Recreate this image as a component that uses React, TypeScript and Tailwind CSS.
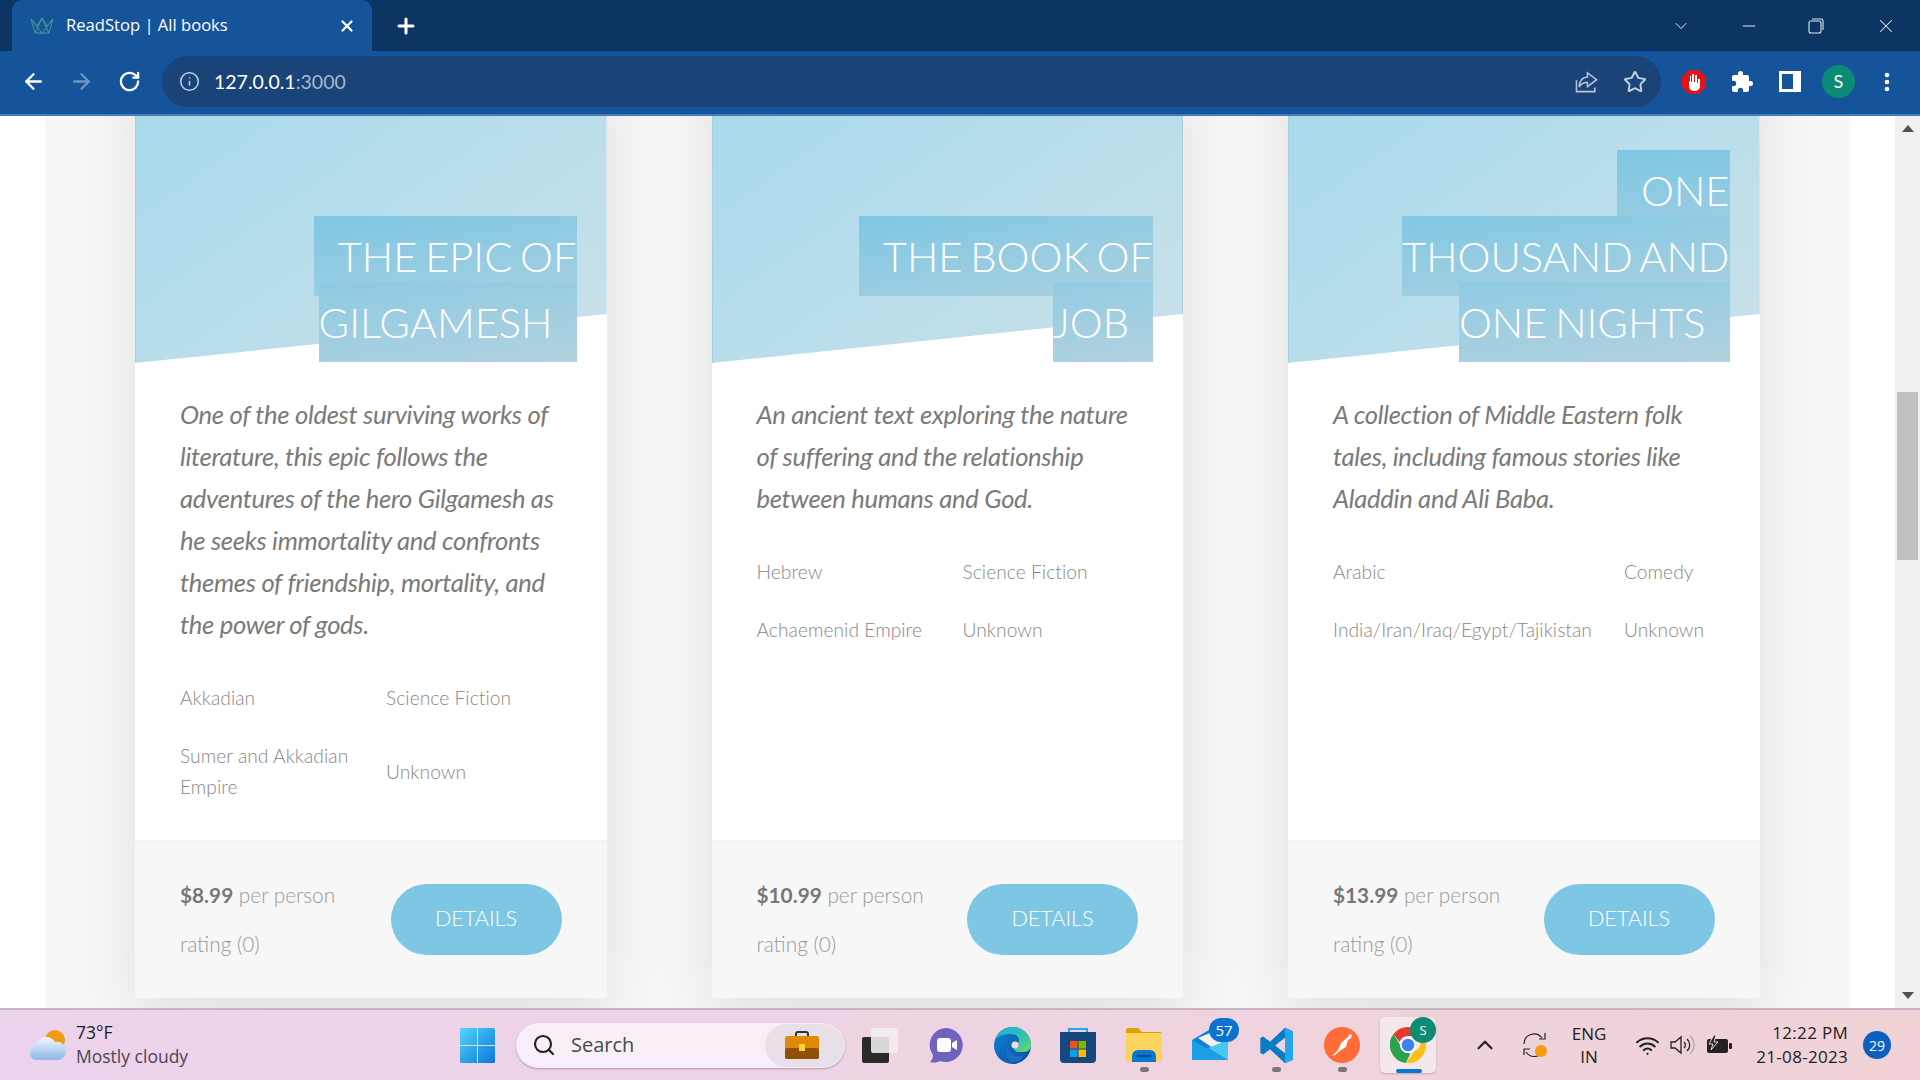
import { ArrowLeft, ArrowRight, RotateCw, Info, Star, Plus, X, ChevronDown, ChevronUp, Minus, EllipsisVertical, Search, Wifi } from "lucide-react";

const BOOKS = [
  {
    title: "THE EPIC OF GILGAMESH",
    summary:
      "One of the oldest surviving works of literature, this epic follows the adventures of the hero Gilgamesh as he seeks immortality and confronts themes of friendship, mortality, and the power of gods.",
    language: "Akkadian",
    genre: "Science Fiction",
    origin: "Sumer and Akkadian Empire",
    author: "Unknown",
    price: "$8.99",
    cols: "grid-cols-[206px_1fr]",
  },
  {
    title: "THE BOOK OF JOB",
    summary:
      "An ancient text exploring the nature of suffering and the relationship between humans and God.",
    language: "Hebrew",
    genre: "Science Fiction",
    origin: "Achaemenid Empire",
    author: "Unknown",
    price: "$10.99",
    cols: "grid-cols-[206px_1fr]",
  },
  {
    title: "ONE THOUSAND AND ONE NIGHTS",
    summary:
      "A collection of Middle Eastern folk tales, including famous stories like Aladdin and Ali Baba.",
    language: "Arabic",
    genre: "Comedy",
    origin: "India/Iran/Iraq/Egypt/Tajikistan",
    author: "Unknown",
    price: "$13.99",
    cols: "grid-cols-[291px_1fr]",
  },
];

function BookCard({ book }: { book: (typeof BOOKS)[number] }) {
  return (
    <div className="flex flex-col bg-white rounded-[3px] shadow-[0_24px_64px_rgba(0,0,0,0.09)]">
      {/* Header */}
      <div className="relative h-[327px] shrink-0">
        <div className="h-full border-x border-[#a6d0e0] bg-linear-to-br from-[#a4d9ec] to-[#c9e1ea] [clip-path:polygon(0_0,100%_0,100%_85%,0_100%)]" />
        <h3 className="absolute right-[30px] bottom-[8px] w-[340px] text-right text-[41.6px] leading-[66px] font-light text-white [word-spacing:-3.5px]">
          <span className="px-6 py-[15px] bg-linear-to-br from-[#7ec7e4] to-[#b2d2df]">{book.title}</span>
        </h3>
      </div>

      {/* Details */}
      <div className="flex-1 px-[45px] pt-[30px] pb-[38px]">
        <p className="text-[25.6px] leading-[42px] italic font-normal text-[#7a7a7a] tracking-[-0.3px]">{book.summary}</p>
        <div className={`grid ${book.cols} gap-y-[27px] items-center mt-[37px] text-[19.2px] leading-[31px] font-light text-[#888] tracking-[0.05px]`}>
          <span>{book.language}</span>
          <span>{book.genre}</span>
          <span>{book.origin}</span>
          <span>{book.author}</span>
        </div>
      </div>

      {/* Footer */}
      <div className="flex items-center justify-between h-[158px] px-[45px] bg-[#f7f7f7] border-t border-[#f2f2f2] rounded-b-[3px]">
        <div className="pb-[2px] text-[20.8px] leading-[31px] font-light text-[#999]">
          <p>
            <b className="font-bold text-[#777]">{book.price}</b> per person
          </p>
          <p className="mt-[18px]">rating (0)</p>
        </div>
        <button className="w-[171px] h-[71px] pb-[2px] rounded-full bg-[#7ec7e4] text-white text-[21.6px] font-light">DETAILS</button>
      </div>
    </div>
  );
}

function Favicon() {
  return (
    <svg width="24" height="18" viewBox="0 0 24 18" fill="none" stroke="#3f9f8d" strokeWidth="1">
      <path d="M1 2l4 14h14l4-14-6 7-5-8-5 8z" />
      <path d="M5 16l7-15 7 15M1 2l11 14L23 2" />
    </svg>
  );
}

function TitleBar() {
  return (
    <div className="flex items-end h-[51px] bg-[#0d3564] text-white shrink-0">
      <div className="flex items-center ml-[12px] w-[360px] h-[51px] pl-[18px] pr-[16px] bg-[#15549a] rounded-t-[10px] text-[16.6px] font-['Open_Sans',sans-serif]">
        <Favicon />
        <span className="ml-[12px] flex-1">ReadStop | All books</span>
        <X size={18} strokeWidth={3} />
      </div>
      <div className="flex items-center h-[51px] ml-[22px] flex-1">
        <Plus size={24} strokeWidth={3} />
        <div className="flex items-center ml-auto text-[#dfe7f1]">
          <ChevronDown size={20} strokeWidth={1.2} className="mr-[48px]" />
          <Minus size={20} strokeWidth={1.2} className="mr-[49px]" />
          <svg width="16" height="16" viewBox="0 0 16 16" fill="none" stroke="currentColor" strokeWidth="1.1" className="mr-[51px]">
            <rect x="1" y="3" width="12" height="12" rx="2" />
            <path d="M4 1h9a2 2 0 0 1 2 2v9" />
          </svg>
          <X size={22} strokeWidth={1.1} className="mr-[23px]" />
        </div>
      </div>
    </div>
  );
}

function Toolbar() {
  return (
    <div className="flex items-center h-[65px] pb-[2px] bg-[#15549a] border-b-2 border-[#4a7cb5] text-white shrink-0">
      <ArrowLeft size={25} strokeWidth={2.2} className="ml-[21px]" />
      <ArrowRight size={25} strokeWidth={2.2} className="ml-[23px] text-[#6e95c4]" />
      <RotateCw size={23} strokeWidth={2.4} className="ml-[24px]" />
      <div className="flex items-center ml-[21px] w-[1499px] h-[51px] rounded-full bg-[#1a4377] text-[19.5px]">
        <Info size={21} strokeWidth={1.8} className="ml-[17px] text-[#c3cedd]" />
        <span className="ml-[14px]">
          127.0.0.1<span className="text-[#a8b8cc]">:3000</span>
        </span>
        <svg width="24" height="22" viewBox="0 0 26 24" fill="none" stroke="#b9c5d6" strokeWidth="1.7" className="ml-auto mr-[24px]">
          <path d="M1.5 10v12.5h20V18" />
          <path d="M13.5 2l10 7.5-10 7.5v-4.5c-4-.3-7 1.300-9 5 0-6 3-10.500 9-11z" />
        </svg>
        <Star size={24} strokeWidth={2} className="mr-[14px] text-[#c3cedd]" />
      </div>
      <svg width="24" height="24" viewBox="0 0 24 24" className="ml-[21px]">
        <path d="M7 0h10l7 7v10l-7 7H7l-7-7V7z" fill="#e5121a" />
        <path d="M7 11v5c0 3 2.500 5 5.500 5s5.500-2 5.500-5v-7h-2v4h-1V5h-2v7h-1V4h-2v8h-1V6H8v6z" fill="#fff" />
      </svg>
      <svg width="24" height="24" viewBox="0 0 24 24" fill="#fff" className="ml-[24px]">
        <path d="M20.500 11H19V7a2 2 0 0 0-2-2h-4V3.500a2.500 2.500 0 0 0-5 0V5H4a2 2 0 0 0-2 2v3.800h1.500a2.700 2.700 0 0 1 0 5.400H2V20a2 2 0 0 0 2 2h3.800v-1.500a2.700 2.700 0 0 1 5.400 0V22H17a2 2 0 0 0 2-2v-4h1.500a2.500 2.500 0 0 0 0-5z" />
      </svg>
      <svg width="22" height="21" viewBox="0 0 22 21" className="ml-[25px]">
        <rect width="22" height="21" fill="#fff" />
        <rect x="3" y="3" width="11" height="15" fill="#15549a" />
      </svg>
      <div className="flex items-center justify-center ml-[21px] w-[33px] h-[33px] rounded-full bg-[#0b8a75] text-[18px]">S</div>
      <EllipsisVertical size={24} strokeWidth={2.6} className="ml-[20px]" />
    </div>
  );
}

function Scrollbar() {
  return (
    <div className="flex flex-col items-center w-[25px] bg-[#f0f0f0] shrink-0">
      <div className="mt-[9px] w-0 h-0 border-x-[6px] border-x-transparent border-b-[7px] border-b-[#505050]" />
      <div className="mt-[260px] w-[21px] h-[168px] bg-[#c0c0c0]" />
      <div className="mt-auto mb-[9px] w-0 h-0 border-x-[6px] border-x-transparent border-t-[7px] border-t-[#505050]" />
    </div>
  );
}

function WeatherIcon() {
  return (
    <svg width="38" height="32" viewBox="0 0 38 32">
      <defs>
        <linearGradient id="cl" x1="0" y1="0" x2="0" y2="1">
          <stop offset="0" stopColor="#f2f6fd" />
          <stop offset="1" stopColor="#8db9ea" />
        </linearGradient>
      </defs>
      <circle cx="26" cy="11" r="10" fill="#f39a16" />
      <path d="M8 31a7 7 0 0 1-2-13.800A11 11 0 0 1 26 13a8.500 8.500 0 0 1 4 18z" fill="url(#cl)" />
    </svg>
  );
}

function WinLogo() {
  return (
    <svg width="35" height="35" viewBox="0 0 35 35">
      <defs>
        <linearGradient id="w1" x1="0" y1="0" x2="1" y2="1">
          <stop offset="0" stopColor="#52d4fb" />
          <stop offset="1" stopColor="#0a78d8" />
        </linearGradient>
      </defs>
      <path d="M0 1.500A1.500 1.500 0 0 1 1.500 0H17v17H0zM18 0h15.500A1.500 1.500 0 0 1 35 1.500V17H18zM0 18h17v17H1.500A1.500 1.500 0 0 1 0 33.500zM18 18h17v15.500a1.500 1.500 0 0 1-1.500 1.500H18z" fill="url(#w1)" />
    </svg>
  );
}

function Briefcase() {
  return (
    <svg width="34" height="28" viewBox="0 0 34 28">
      <path d="M11 6V3a2 2 0 0 1 2-2h8a2 2 0 0 1 2 2v3" fill="none" stroke="#333" strokeWidth="2" />
      <rect y="5" width="34" height="23" rx="2" fill="#e08a0c" />
      <rect y="17" width="34" height="11" rx="2" fill="#8f4f0a" />
      <rect x="14" y="13" width="6" height="7" fill="#f8d43a" />
    </svg>
  );
}

function TaskView() {
  return (
    <svg width="36" height="35" viewBox="0 0 36 35">
      <rect y="9" width="27" height="26" rx="2" fill="#2a2a2a" />
      <rect x="9" width="27" height="25" rx="2" fill="#f4eef1" fillOpacity="0.88" />
    </svg>
  );
}

function TeamsIcon() {
  return (
    <svg width="34" height="36" viewBox="0 0 34 36">
      <path d="M17 1a17 17 0 1 1-6 33c-3 1.500-7 2-10 1 2-2 3-4 3-7A17 17 0 0 1 17 1z" fill="#6f63bd" />
      <rect x="8" y="11" width="14" height="14" rx="3" fill="#fff" />
      <path d="M23 16l5-3v10l-5-3z" fill="#fff" />
    </svg>
  );
}

function EdgeIcon() {
  return (
    <svg width="37" height="37" viewBox="0 0 37 37">
      <defs>
        <linearGradient id="e1" x1="0" y1="0" x2="1" y2="1">
          <stop offset="0" stopColor="#1bb0dc" />
          <stop offset="0.6" stopColor="#35c1b0" />
          <stop offset="1" stopColor="#6fe05a" />
        </linearGradient>
        <linearGradient id="e2" x1="0" y1="0" x2="1" y2="1">
          <stop offset="0" stopColor="#0c82d4" />
          <stop offset="1" stopColor="#0c4f9e" />
        </linearGradient>
      </defs>
      <circle cx="18.500" cy="18.500" r="18.500" fill="url(#e2)" />
      <path d="M1 13C4 4 11 0 18.500 0 29 0 37 8 37 18c0 4-3 7-7 7h-5c-3 0-5-2-5-3 0-4 5-4 5-9 0-3-3-6-8-6C10 7 3 9 1 13z" fill="url(#e1)" />
      <path d="M14 19c0 6 5 10 11 10 2 0 4-.500 5-1-3 5-8 8-13 7 -4-3-6-11-3-16z" fill="#1a6fc0" />
      <circle cx="21" cy="18" r="3.500" fill="#f3d6e0" />
    </svg>
  );
}

function StoreIcon() {
  return (
    <svg width="36" height="36" viewBox="0 0 36 36">
      <path d="M9 8V2h18v6" fill="none" stroke="#27a9e6" strokeWidth="2" />
      <path d="M0 5h36v27a4 4 0 0 1-4 4H4a4 4 0 0 1-4-4z" fill="#17477f" />
      <rect x="10" y="14" width="7.500" height="7.500" fill="#ef5023" />
      <rect x="18.500" y="14" width="7.500" height="7.500" fill="#7fb900" />
      <rect x="10" y="22.500" width="7.500" height="7.500" fill="#00a3ee" />
      <rect x="18.500" y="22.500" width="7.500" height="7.500" fill="#ffb900" />
    </svg>
  );
}

function FolderIcon() {
  return (
    <svg width="36" height="34" viewBox="0 0 36 34">
      <path d="M0 2a2 2 0 0 1 2-2h10l4 4h18a2 2 0 0 1 2 2v4H0z" fill="#e0a000" />
      <path d="M0 5h36v29H0z" fill="#fdd35f" />
      <path d="M6 34v-6a6 6 0 0 1 6-6h12a6 6 0 0 1 6 6v6z" fill="#0a78cf" />
      <rect x="11" y="27" width="14" height="2" fill="#064f92" />
    </svg>
  );
}

function MailIcon() {
  return (
    <svg width="36" height="30" viewBox="0 0 36 30">
      <path d="M0 10L17 0l19 10v20H0z" fill="#1181d4" />
      <path d="M6 8l12-5 12 10-9 5z" fill="#f4f1f2" />
      <path d="M0 10l36 20H0z" fill="#1b9fe6" />
      <path d="M36 10v20L16 18z" fill="#47c7f0" />
    </svg>
  );
}

function VsCodeIcon() {
  return (
    <svg width="37" height="37" viewBox="0 0 24 24">
      <path d="M17.500 0.500L7.800 9.600 3.400 6.200 1.500 7.200v9.600l1.900 1 4.400-3.400 9.700 9.100 5-2.300V2.800zM17.500 7v10l-6.400-5z" fill="#0a7cc4" />
      <path d="M17.500 0.500l5 2.300v18.400l-5 2.300z" fill="#24a6ec" />
    </svg>
  );
}

function PostmanIcon() {
  return (
    <svg width="36" height="36" viewBox="0 0 36 36">
      <circle cx="18" cy="18" r="18" fill="#ff6c37" />
      <path d="M8 29l6-6 3-7 7-6 2-3 2 1-1 3-3 2-2 7-5 3-6 5z" fill="#fff" />
    </svg>
  );
}

function ChromeIcon() {
  return (
    <svg width="36" height="36" viewBox="0 0 36 36">
      <path d="M18 0a18 18 0 0 1 15.600 9H18a9 9 0 0 0-8.500 6L3.600 7A18 18 0 0 1 18 0z" fill="#e33b2e" />
      <path d="M3.600 7l7 12a8 8 0 0 0 10 7L15.800 35.900A18 18 0 0 1 3.600 7z" fill="#2ba24c" />
      <path d="M33.600 9A18 18 0 0 1 15.800 35.900L24.500 24a8 8 0 0 0 1-15z" fill="#fbc116" />
      <circle cx="18" cy="18" r="8" fill="#fff" />
      <circle cx="18" cy="18" r="6.300" fill="#3b82ee" />
    </svg>
  );
}

function SyncIcon() {
  return (
    <svg width="26" height="26" viewBox="0 0 26 26" fill="none" stroke="#222" strokeWidth="1.200">
      <path d="M2 12a10 10 0 0 1 18-6M23 1v6h-6M22 17a10 10 0 0 1-18 3M2 23v-6h6" />
      <circle cx="19" cy="19" r="6" fill="#f79a0e" stroke="none" />
    </svg>
  );
}

function Taskbar() {
  return (
    <div className="flex items-center h-[72px] bg-linear-to-r from-[#ecd3ec] via-[#eed4e2] to-[#f0d2d6] border-t-2 border-[#c6b2c0] text-[#222] font-['Open_Sans',sans-serif] shrink-0">
      <div className="ml-[29px] w-[47px]">
        <WeatherIcon />
      </div>
      <div className="w-[384px] pb-[3px] text-[17.5px] leading-[24px]">
        <p className="text-[#1c1c1c]">73°F</p>
        <p className="text-[#4c4550]">Mostly cloudy</p>
      </div>
      <WinLogo />
      <div className="flex items-center ml-[21px] w-[329px] h-[45px] rounded-full bg-[#f7eef8] shadow-[0_1px_2px_rgba(120,90,120,0.5)]">
        <Search size={24} strokeWidth={2.2} className="ml-[16px]" />
        <span className="ml-[15px] text-[20px] text-[#4a4a4a]">Search</span>
        <div className="flex items-center justify-center ml-auto mr-[1px] w-[79px] h-[43px] pr-[5px] rounded-full bg-[#e8dfe8]">
          <Briefcase />
        </div>
      </div>
      <div className="flex items-center ml-[2px]">
        <Cell><TaskView /></Cell>
        <Cell><TeamsIcon /></Cell>
        <Cell><EdgeIcon /></Cell>
        <Cell><StoreIcon /></Cell>
        <Cell dot><FolderIcon /></Cell>
        <Cell>
          <MailIcon />
          <span className="absolute top-[1px] left-[32px] w-[30px] h-[24px] rounded-full bg-[#0c72cf] text-white text-[15px] leading-[24px] text-center">57</span>
        </Cell>
        <Cell dot><VsCodeIcon /></Cell>
        <Cell dot><PostmanIcon /></Cell>
        <div className="relative flex items-center justify-center w-[56px] h-[56px] ml-[5px] rounded-[5px] bg-[#f5e8ea] shadow-[0_1px_2px_rgba(0,0,0,0.2)]">
          <ChromeIcon />
          <span className="absolute top-0 right-0 w-[26px] h-[26px] rounded-full bg-[#0f8a74] text-white text-[13px] leading-[26px] text-center">S</span>
          <span className="absolute bottom-0 left-[16px] w-[26px] h-[4px] rounded-full bg-[#0a74d4]" />
        </div>
      </div>
      <ChevronUp size={26} strokeWidth={2} className="ml-[36px]" />
      <div className="ml-[24px]"><SyncIcon /></div>
      <div className="ml-[20px] w-[42px] text-center text-[17px] leading-[23px]">
        <p>ENG</p>
        <p>IN</p>
      </div>
      <Wifi size={25} strokeWidth={2} className="ml-[25px]" />
      <svg width="25" height="24" viewBox="0 0 25 24" fill="none" stroke="#222" strokeWidth="1.300" className="ml-[10px]">
        <path d="M1 9v6h4l6 5V4L5 9z" />
        <path d="M14 9a4 4 0 0 1 0 6M17 6a8 8 0 0 1 0 12" />
        <path d="M20 3a12 12 0 0 1 0 18" stroke="#b5a5a8" />
      </svg>
      <svg width="26" height="20" viewBox="0 0 26 20" className="ml-[11px]">
        <rect x="1" y="4" width="21" height="14" rx="2" fill="#222" />
        <rect x="23" y="8" width="3" height="6" rx="1" fill="#222" />
        <path d="M8 0L3 9h4l-2 6 7-8H8l2-7z" fill="#222" stroke="#f0d2d6" strokeWidth="1" />
      </svg>
      <div className="ml-auto text-right text-[17px] leading-[24px] tracking-[0.3px]">
        <p>12:22 PM</p>
        <p>21-08-2023</p>
      </div>
      <div className="flex items-center justify-center ml-[15px] mr-[29px] w-[28px] h-[28px] rounded-full bg-[#0c60c0] text-white text-[14px]">29</div>
    </div>
  );
}

function Cell({ children, dot }: { children: React.ReactNode; dot?: boolean }) {
  return (
    <div className="relative flex items-center justify-center w-[66px] h-[56px]">
      {children}
      {dot && <span className="absolute bottom-[1px] left-[29px] w-[9px] h-[5px] rounded-full bg-[#7d7478]" />}
    </div>
  );
}

export default function App() {
  return (
    <div className="flex flex-col w-[1920px] h-[1080px] overflow-hidden bg-white font-['Lato',sans-serif]">
      <TitleBar />
      <Toolbar />
      <div className="flex flex-1 min-h-0">
        <div className="flex-1 min-w-0 overflow-hidden bg-white px-[45px]">
          <div className="h-full overflow-hidden bg-[#f7f7f7] pl-[90px]">
            <div className="grid grid-cols-[repeat(3,471.5px)] gap-x-[105px] -mt-[80px] pb-[100px]">
              {BOOKS.map((book) => (
                <BookCard key={book.title} book={book} />
              ))}
            </div>
          </div>
        </div>
        <Scrollbar />
      </div>
      <Taskbar />
    </div>
  );
}
